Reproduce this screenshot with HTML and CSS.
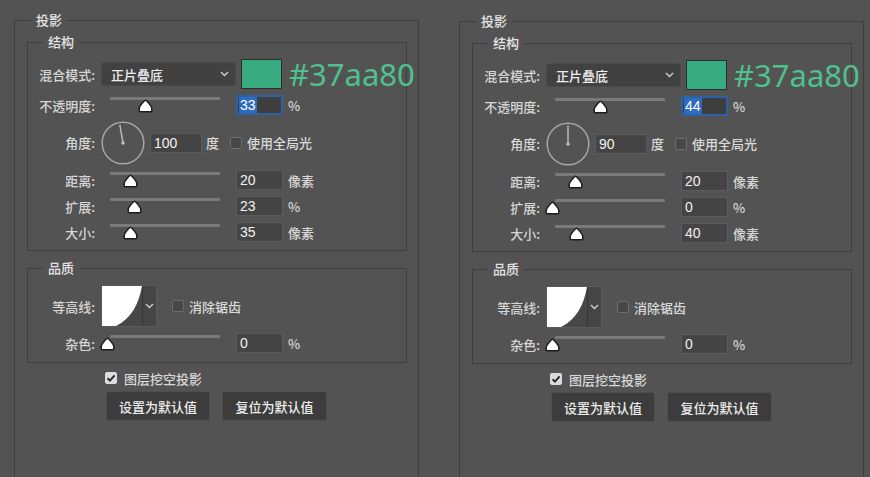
FILE: index.html
```html
<!DOCTYPE html>
<html lang="zh-CN">
<head>
<meta charset="utf-8">
<title>投影</title>
<link rel="stylesheet" href="styles.css">
</head>
<body>
<div class="page">

  <fieldset class="panel">
    <legend>投影</legend>
    <div class="panel-body">
      <fieldset class="group struct">
        <legend>结构</legend>
        <div class="row row-blend">
          <span class="lbl">混合模式:</span>
          <div class="select"><span>正片叠底</span><svg class="chev" width="9" height="6" viewBox="0 0 9 6"><path d="M1 1 L4.5 4.5 L8 1" fill="none" stroke="#d0d0d0" stroke-width="1.4"/></svg></div>
          <span class="swatch"></span>
          <span class="hex">#37aa80</span>
        </div>
        <div class="row">
          <span class="lbl">不透明度:</span>
          <div class="slider"><span class="track"></span><svg class="thumb" style="left:37px" width="15" height="14" viewBox="0 0 15 14"><path d="M7.5 1.2 C8.6 1.2 13.8 7.6 13.8 9.4 V11.8 Q13.8 12.8 12.8 12.8 H2.2 Q1.2 12.8 1.2 11.8 V9.4 C1.2 7.6 6.4 1.2 7.5 1.2 Z" fill="#fff" stroke="#1c1c1c" stroke-width="1.5"/></svg></div>
          <div class="num focus"><span class="sel">33</span></div>
          <span class="unit">%</span>
        </div>
        <div class="row row-angle">
          <span class="lbl">角度:</span>
          <svg class="dial" width="44" height="44" viewBox="0 0 44 44"><circle cx="22" cy="22" r="20.8" fill="none" stroke="#a6a6a6" stroke-width="1.5"/><line x1="22" y1="22" x2="18.8" y2="3.6" stroke="#b8b8b8" stroke-width="1.5"/><circle cx="22" cy="22" r="1.8" fill="#bdbdbd"/></svg>
          <div class="num wide">100</div>
          <span class="unit">度</span>
          <span class="cb"></span>
          <span class="cb-text">使用全局光</span>
        </div>
        <div class="row">
          <span class="lbl">距离:</span>
          <div class="slider"><span class="track"></span><svg class="thumb" style="left:22px" width="15" height="14" viewBox="0 0 15 14"><path d="M7.5 1.2 C8.6 1.2 13.8 7.6 13.8 9.4 V11.8 Q13.8 12.8 12.8 12.8 H2.2 Q1.2 12.8 1.2 11.8 V9.4 C1.2 7.6 6.4 1.2 7.5 1.2 Z" fill="#fff" stroke="#1c1c1c" stroke-width="1.5"/></svg></div>
          <div class="num">20</div>
          <span class="unit">像素</span>
        </div>
        <div class="row">
          <span class="lbl">扩展:</span>
          <div class="slider"><span class="track"></span><svg class="thumb" style="left:26px" width="15" height="14" viewBox="0 0 15 14"><path d="M7.5 1.2 C8.6 1.2 13.8 7.6 13.8 9.4 V11.8 Q13.8 12.8 12.8 12.8 H2.2 Q1.2 12.8 1.2 11.8 V9.4 C1.2 7.6 6.4 1.2 7.5 1.2 Z" fill="#fff" stroke="#1c1c1c" stroke-width="1.5"/></svg></div>
          <div class="num">23</div>
          <span class="unit">%</span>
        </div>
        <div class="row">
          <span class="lbl">大小:</span>
          <div class="slider"><span class="track"></span><svg class="thumb" style="left:22px" width="15" height="14" viewBox="0 0 15 14"><path d="M7.5 1.2 C8.6 1.2 13.8 7.6 13.8 9.4 V11.8 Q13.8 12.8 12.8 12.8 H2.2 Q1.2 12.8 1.2 11.8 V9.4 C1.2 7.6 6.4 1.2 7.5 1.2 Z" fill="#fff" stroke="#1c1c1c" stroke-width="1.5"/></svg></div>
          <div class="num">35</div>
          <span class="unit">像素</span>
        </div>
      </fieldset>

      <fieldset class="group quality">
        <legend>品质</legend>
        <div class="row row-contour">
          <span class="lbl">等高线:</span>
          <div class="contour">
            <svg class="curve" width="40" height="40" viewBox="0 0 40 40"><rect width="40" height="40" fill="#474747"/><path d="M0 0 H40 C37 17 30 32 14 40 H0 Z" fill="#fff"/></svg>
            <span class="contour-btn"><svg width="9" height="6" viewBox="0 0 9 6"><path d="M1 1 L4.5 4.5 L8 1" fill="none" stroke="#d0d0d0" stroke-width="1.4"/></svg></span>
          </div>
          <span class="cb cb-aa"></span>
          <span class="cb-text">消除锯齿</span>
        </div>
        <div class="row">
          <span class="lbl">杂色:</span>
          <div class="slider"><span class="track"></span><svg class="thumb" style="left:-1px" width="15" height="14" viewBox="0 0 15 14"><path d="M7.5 1.2 C8.6 1.2 13.8 7.6 13.8 9.4 V11.8 Q13.8 12.8 12.8 12.8 H2.2 Q1.2 12.8 1.2 11.8 V9.4 C1.2 7.6 6.4 1.2 7.5 1.2 Z" fill="#fff" stroke="#1c1c1c" stroke-width="1.5"/></svg></div>
          <div class="num">0</div>
          <span class="unit">%</span>
        </div>
      </fieldset>

      <div class="knock">
        <span class="cb checked"><svg width="12" height="12" viewBox="0 0 12 12"><path d="M2.6 6.2 L5 8.6 L9.6 3.4" fill="none" stroke="#2a2a2a" stroke-width="2"/></svg></span>
        <span class="cb-text">图层挖空投影</span>
      </div>
      <div class="btns">
        <button class="btn b1">设置为默认值</button>
        <button class="btn b2">复位为默认值</button>
      </div>
    </div>
  </fieldset>

  <fieldset class="panel right">
    <legend>投影</legend>
    <div class="panel-body">
      <fieldset class="group struct">
        <legend>结构</legend>
        <div class="row row-blend">
          <span class="lbl">混合模式:</span>
          <div class="select"><span>正片叠底</span><svg class="chev" width="9" height="6" viewBox="0 0 9 6"><path d="M1 1 L4.5 4.5 L8 1" fill="none" stroke="#d0d0d0" stroke-width="1.4"/></svg></div>
          <span class="swatch"></span>
          <span class="hex">#37aa80</span>
        </div>
        <div class="row">
          <span class="lbl">不透明度:</span>
          <div class="slider"><span class="track"></span><svg class="thumb" style="left:47px" width="15" height="14" viewBox="0 0 15 14"><path d="M7.5 1.2 C8.6 1.2 13.8 7.6 13.8 9.4 V11.8 Q13.8 12.8 12.8 12.8 H2.2 Q1.2 12.8 1.2 11.8 V9.4 C1.2 7.6 6.4 1.2 7.5 1.2 Z" fill="#fff" stroke="#1c1c1c" stroke-width="1.5"/></svg></div>
          <div class="num focus"><span class="sel">44</span></div>
          <span class="unit">%</span>
        </div>
        <div class="row row-angle">
          <span class="lbl">角度:</span>
          <svg class="dial" width="44" height="44" viewBox="0 0 44 44"><circle cx="22" cy="22" r="20.8" fill="none" stroke="#a6a6a6" stroke-width="1.5"/><line x1="22" y1="22" x2="22" y2="3.4" stroke="#b8b8b8" stroke-width="1.5"/><circle cx="22" cy="22" r="1.8" fill="#bdbdbd"/></svg>
          <div class="num wide">90</div>
          <span class="unit">度</span>
          <span class="cb"></span>
          <span class="cb-text">使用全局光</span>
        </div>
        <div class="row">
          <span class="lbl">距离:</span>
          <div class="slider"><span class="track"></span><svg class="thumb" style="left:22px" width="15" height="14" viewBox="0 0 15 14"><path d="M7.5 1.2 C8.6 1.2 13.8 7.6 13.8 9.4 V11.8 Q13.8 12.8 12.8 12.8 H2.2 Q1.2 12.8 1.2 11.8 V9.4 C1.2 7.6 6.4 1.2 7.5 1.2 Z" fill="#fff" stroke="#1c1c1c" stroke-width="1.5"/></svg></div>
          <div class="num">20</div>
          <span class="unit">像素</span>
        </div>
        <div class="row">
          <span class="lbl">扩展:</span>
          <div class="slider"><span class="track"></span><svg class="thumb" style="left:-1px" width="15" height="14" viewBox="0 0 15 14"><path d="M7.5 1.2 C8.6 1.2 13.8 7.6 13.8 9.4 V11.8 Q13.8 12.8 12.8 12.8 H2.2 Q1.2 12.8 1.2 11.8 V9.4 C1.2 7.6 6.4 1.2 7.5 1.2 Z" fill="#fff" stroke="#1c1c1c" stroke-width="1.5"/></svg></div>
          <div class="num">0</div>
          <span class="unit">%</span>
        </div>
        <div class="row">
          <span class="lbl">大小:</span>
          <div class="slider"><span class="track"></span><svg class="thumb" style="left:23px" width="15" height="14" viewBox="0 0 15 14"><path d="M7.5 1.2 C8.6 1.2 13.8 7.6 13.8 9.4 V11.8 Q13.8 12.8 12.8 12.8 H2.2 Q1.2 12.8 1.2 11.8 V9.4 C1.2 7.6 6.4 1.2 7.5 1.2 Z" fill="#fff" stroke="#1c1c1c" stroke-width="1.5"/></svg></div>
          <div class="num">40</div>
          <span class="unit">像素</span>
        </div>
      </fieldset>

      <fieldset class="group quality">
        <legend>品质</legend>
        <div class="row row-contour">
          <span class="lbl">等高线:</span>
          <div class="contour">
            <svg class="curve" width="40" height="40" viewBox="0 0 40 40"><rect width="40" height="40" fill="#474747"/><path d="M0 0 H40 C37 17 30 32 14 40 H0 Z" fill="#fff"/></svg>
            <span class="contour-btn"><svg width="9" height="6" viewBox="0 0 9 6"><path d="M1 1 L4.5 4.5 L8 1" fill="none" stroke="#d0d0d0" stroke-width="1.4"/></svg></span>
          </div>
          <span class="cb cb-aa"></span>
          <span class="cb-text">消除锯齿</span>
        </div>
        <div class="row">
          <span class="lbl">杂色:</span>
          <div class="slider"><span class="track"></span><svg class="thumb" style="left:-1px" width="15" height="14" viewBox="0 0 15 14"><path d="M7.5 1.2 C8.6 1.2 13.8 7.6 13.8 9.4 V11.8 Q13.8 12.8 12.8 12.8 H2.2 Q1.2 12.8 1.2 11.8 V9.4 C1.2 7.6 6.4 1.2 7.5 1.2 Z" fill="#fff" stroke="#1c1c1c" stroke-width="1.5"/></svg></div>
          <div class="num">0</div>
          <span class="unit">%</span>
        </div>
      </fieldset>

      <div class="knock">
        <span class="cb checked"><svg width="12" height="12" viewBox="0 0 12 12"><path d="M2.6 6.2 L5 8.6 L9.6 3.4" fill="none" stroke="#2a2a2a" stroke-width="2"/></svg></span>
        <span class="cb-text">图层挖空投影</span>
      </div>
      <div class="btns">
        <button class="btn b1">设置为默认值</button>
        <button class="btn b2">复位为默认值</button>
      </div>
    </div>
  </fieldset>

</div>
</body>
</html>
```

FILE: styles.css
```css
* { box-sizing: border-box; }

html, body {
  margin: 0;
  height: 100%;
}

body {
  background: #535353;
  overflow: hidden;
  font-family: "Noto Sans CJK SC", "Noto Sans", sans-serif;
  font-size: 13px;
  font-weight: 500;
  color: #d9d9d9;
}

.page {
  display: flex;
  align-items: flex-start;
  gap: 40px;
  padding: 13px 0 0 14px;
}

.panel {
  margin: 0;
  padding: 0;
  min-width: 0;
  width: 405px;
  height: 520px;
  border: 1px solid #3e3e3e;
  flex: none;
}

.panel.right { margin-top: 1px; }

.panel > legend,
.group > legend {
  padding: 0 5px;
  line-height: 14px;
  font-size: 13px;
  color: #e4e4e4;
}

.panel > legend { margin-left: 16px; }
.group > legend { margin-left: 15px; }

.panel-body {
  padding: 8px 0 0 12px;
}

.group {
  margin: 0;
  min-width: 0;
  width: 380px;
  border: 1px solid #3e3e3e;
  display: flex;
  flex-direction: column;
  gap: 6px;
}

.struct { padding: 10px 0 8px 0; }
.quality { margin-top: 10px; padding: 10px 0 9px 0; }

.row {
  display: flex;
  align-items: center;
  height: 20px;
  white-space: nowrap;
}

.row > * { flex: none; }

.row-blend { height: 30px; }
.row-angle { height: 43px; }
.row-contour { height: 42px; }

.lbl {
  width: 67px;
  margin-right: 6px;
  text-align: right;
  color: #d6d6d6;
}

/* blend mode */
.select {
  width: 135px;
  height: 24px;
  background: #414141;
  border: 1px solid #4a4a4a;
  border-radius: 3px;
  display: flex;
  align-items: center;
  justify-content: space-between;
  padding: 0 6px 0 9px;
  color: #ededed;
}

.swatch {
  margin-left: 5px;
  width: 41px;
  height: 30px;
  background: #37aa80;
  border: 1px solid #2e2e2e;
}

.hex {
  margin-left: 7px;
  font-family: "Noto Sans", sans-serif;
  font-size: 31px;
  font-weight: 400;
  line-height: 30px;
  color: #4fc08e;
}

/* slider */
.slider {
  position: relative;
  width: 125px;
  height: 20px;
}

.track {
  display: block;
  margin: 2px 0 0 9px;
  width: 110px;
  height: 3px;
  background: #7a7a7a;
  border-radius: 1px;
}

.thumb {
  position: absolute;
  top: 4px;
}

/* numeric fields */
.num {
  margin-left: 10px;
  width: 47px;
  height: 20px;
  background: #444444;
  border: 1px solid #5c5c5c;
  color: #f2f2f2;
  font-family: "Liberation Sans", Arial, sans-serif;
  font-size: 14px;
  font-weight: 400;
  line-height: 18px;
  padding-left: 3px;
}

.num.focus {
  border: 2px solid #2d62a6;
  background: #3e3e3e;
  padding-left: 1px;
  line-height: 16px;
}

.sel {
  display: inline-block;
  background: #2f6cbf;
  color: #fff;
  padding: 0 1px;
}

.num.wide {
  margin-left: 5px;
  width: 52px;
}

.unit {
  margin-left: 5px;
  color: #d6d6d6;
}

.row-angle .unit { margin-left: 4px; }

/* checkboxes */
.cb {
  display: inline-block;
  width: 12px;
  height: 12px;
  border: 1px solid #6e6e6e;
  background: #474747;
  border-radius: 2px;
  margin-left: 11px;
}

.cb.cb-aa { margin-left: 15px; }

.cb-text {
  margin-left: 5px;
  color: #d9d9d9;
}

.cb.checked {
  flex: none;
  margin-left: 0;
  background: #dcdcdc;
  border-color: #dcdcdc;
}

.cb.checked svg {
  display: block;
  margin: -1px 0 0 -1px;
}

/* contour */
.contour {
  display: flex;
  height: 42px;
  border: 1px solid #5a5a5a;
  border-radius: 2px;
  background: #444;
}

.curve { display: block; }

.contour-btn {
  width: 14px;
  border-left: 1px solid #363636;
  background: #454545;
  display: flex;
  align-items: center;
  justify-content: center;
}

/* knockout + buttons */
.knock {
  display: flex;
  align-items: center;
  height: 14px;
  margin: 8px 0 0 78px;
}

.knock .cb-text { margin-left: 7px; }

.btns {
  display: flex;
  gap: 12px;
  margin: 6px 0 0 79px;
}

.btn {
  height: 30px;
  background: #3c3c3c;
  border: 1px solid #4e4e4e;
  border-radius: 3px;
  color: #ececec;
  font-family: "Noto Sans CJK SC", sans-serif;
  font-size: 13px;
  font-weight: 500;
  padding: 0;
}

.b1 { width: 104px; }
.b2 { width: 105px; }
```
